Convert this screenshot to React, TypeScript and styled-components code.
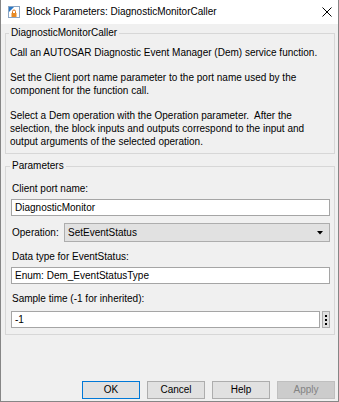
import React from 'react';
import styled, { createGlobalStyle } from 'styled-components';

const Global = createGlobalStyle`
  html, body { margin: 0; padding: 0; background: #f0f0f0; }
  body {
    font-family: "Liberation Sans", Arial, sans-serif;
    font-size: 10px;
    color: #000;
  }
  * { box-sizing: border-box; }
`;

const Window = styled.div`
  width: 339px;
  height: 402px;
  display: flex;
  flex-direction: column;
  border: 1px solid #868686;
  border-top: none;
  background: #f0f0f0;
`;

const TitleBar = styled.div`
  height: 24px;
  flex: none;
  display: flex;
  align-items: center;
  background: #fff;
  padding: 0 6px 0 7px;
`;

const TitleText = styled.div`
  flex: 1;
  margin-left: 6px;
  font-size: 10px;
  line-height: 12px;
  color: #000;
  white-space: nowrap;
`;

const CloseBox = styled.div`
  width: 10px;
  height: 10px;
  display: flex;
  margin-top: -1px;
`;

const Content = styled.div`
  flex: 1;
  display: flex;
  flex-direction: column;
  padding: 3px 3px 2px 4px;
`;

const Group = styled.fieldset<{ $gap?: number; $pad: string }>`
  margin: ${(p) => p.$gap ?? 0}px 0 0 0;
  padding: ${(p) => p.$pad};
  border: 1px solid #d7d7d7;
  min-width: 0;
`;

const Legend = styled.legend`
  font-size: 10px;
  line-height: 12px;
  padding: 0 2px;
  margin-left: -1px;
`;

const Para = styled.p`
  margin: 0 0 12px 0;
  line-height: 13px;
  white-space: pre-wrap;
  &:last-child { margin-bottom: 0; }
`;

const Label = styled.div<{ $top: number; $bottom: number }>`
  line-height: 13px;
  padding-left: 1px;
  margin-top: ${(p) => p.$top}px;
  margin-bottom: ${(p) => p.$bottom}px;
  white-space: nowrap;
`;

const InputRow = styled.div`
  display: flex;
  align-items: center;
  gap: 2px;
`;

const TextBox = styled.div`
  flex: 1;
  height: 17px;
  background: #fff;
  border: 1px solid #a5a5a5;
  padding: 0 3px;
  line-height: 15px;
  white-space: nowrap;
`;

const SelectRow = styled.div`
  display: flex;
  align-items: center;
  margin-top: 7px;
`;

const SelectLabel = styled.div`
  width: 53px;
  padding-left: 1px;
  line-height: 13px;
`;

const SelectBox = styled.div`
  flex: 1;
  height: 19px;
  display: flex;
  align-items: center;
  justify-content: space-between;
  background: #e1e1e1;
  border: 1px solid #adadad;
  padding: 0 6px 0 3px;
`;

const DotsButton = styled.div`
  width: 8px;
  height: 17px;
  display: flex;
  align-items: center;
  justify-content: center;
  background: #e1e1e1;
  border: 1px solid #adadad;
`;

const Footer = styled.div`
  margin-top: auto;
  display: flex;
  justify-content: flex-end;
  gap: 7px;
`;

const Button = styled.div<{ $default?: boolean; $disabled?: boolean }>`
  width: 58px;
  height: 18px;
  display: flex;
  align-items: center;
  justify-content: center;
  background: ${(p) => (p.$disabled ? '#cccccc' : '#e1e1e1')};
  border: 1px solid ${(p) => (p.$default ? '#0078d7' : p.$disabled ? '#bfbfbf' : '#adadad')};
  color: ${(p) => (p.$disabled ? '#838383' : '#000')};
  line-height: 16px;
`;

const BlockIcon = () => (
  <svg width="12" height="12" viewBox="0 0 12 12">
    <rect x="0.5" y="0.5" width="11" height="11" fill="#fff" stroke="#8aa5c4" />
    <polygon points="1,1 6,1 1,6" fill="#2b78c5" />
    <path d="M4.5 7 V5.5 a1.5 1.5 0 0 1 3 0 V7" fill="none" stroke="#d9731a" strokeWidth="1" />
    <rect x="3.5" y="7" width="5" height="4" fill="#e88a23" />
  </svg>
);

const CloseIcon = () => (
  <svg width="10" height="10" viewBox="0 0 10 10">
    <path d="M0.5 0.5 L9.5 9.5 M9.5 0.5 L0.5 9.5" stroke="#000" strokeWidth="1" fill="none" />
  </svg>
);

const Arrow = () => (
  <svg width="6" height="4" viewBox="0 0 6 4">
    <polygon points="0,0 6,0 3,3.5" fill="#000" />
  </svg>
);

const Dots = () => (
  <svg width="2" height="10" viewBox="0 0 2 10">
    <rect x="0" y="0" width="2" height="2" fill="#000" />
    <rect x="0" y="4" width="2" height="2" fill="#000" />
    <rect x="0" y="8" width="2" height="2" fill="#000" />
  </svg>
);

export default function App() {
  return (
    <>
      <Global />
      <Window>
        <TitleBar>
          <BlockIcon />
          <TitleText>Block Parameters: DiagnosticMonitorCaller</TitleText>
          <CloseBox>
            <CloseIcon />
          </CloseBox>
        </TitleBar>
        <Content>
          <Group $pad="7px 4px 5px 4px">
            <Legend>DiagnosticMonitorCaller</Legend>
            <Para>Call an AUTOSAR Diagnostic Event Manager (Dem) service function.</Para>
            <Para>Set the Client port name parameter to the port name used by the component for the function call.</Para>
            <Para>{'Select a Dem operation with the Operation parameter.  After the selection, the block inputs and outputs correspond to the input and output arguments of the selected operation.'}</Para>
          </Group>
          <Group $gap={6} $pad="0 4px 6px 5px">
            <Legend>Parameters</Legend>
            <Label $top={10} $bottom={4}>Client port name:</Label>
            <InputRow>
              <TextBox>DiagnosticMonitor</TextBox>
            </InputRow>
            <SelectRow>
              <SelectLabel>Operation:</SelectLabel>
              <SelectBox>
                <span>SetEventStatus</span>
                <Arrow />
              </SelectBox>
            </SelectRow>
            <Label $top={8} $bottom={4}>Data type for EventStatus:</Label>
            <InputRow>
              <TextBox>Enum: Dem_EventStatusType</TextBox>
            </InputRow>
            <Label $top={8} $bottom={6}>Sample time (-1 for inherited):</Label>
            <InputRow>
              <TextBox>-1</TextBox>
              <DotsButton>
                <Dots />
              </DotsButton>
            </InputRow>
          </Group>
          <Footer>
            <Button $default>OK</Button>
            <Button>Cancel</Button>
            <Button>Help</Button>
            <Button $disabled>Apply</Button>
          </Footer>
        </Content>
      </Window>
    </>
  );
}
